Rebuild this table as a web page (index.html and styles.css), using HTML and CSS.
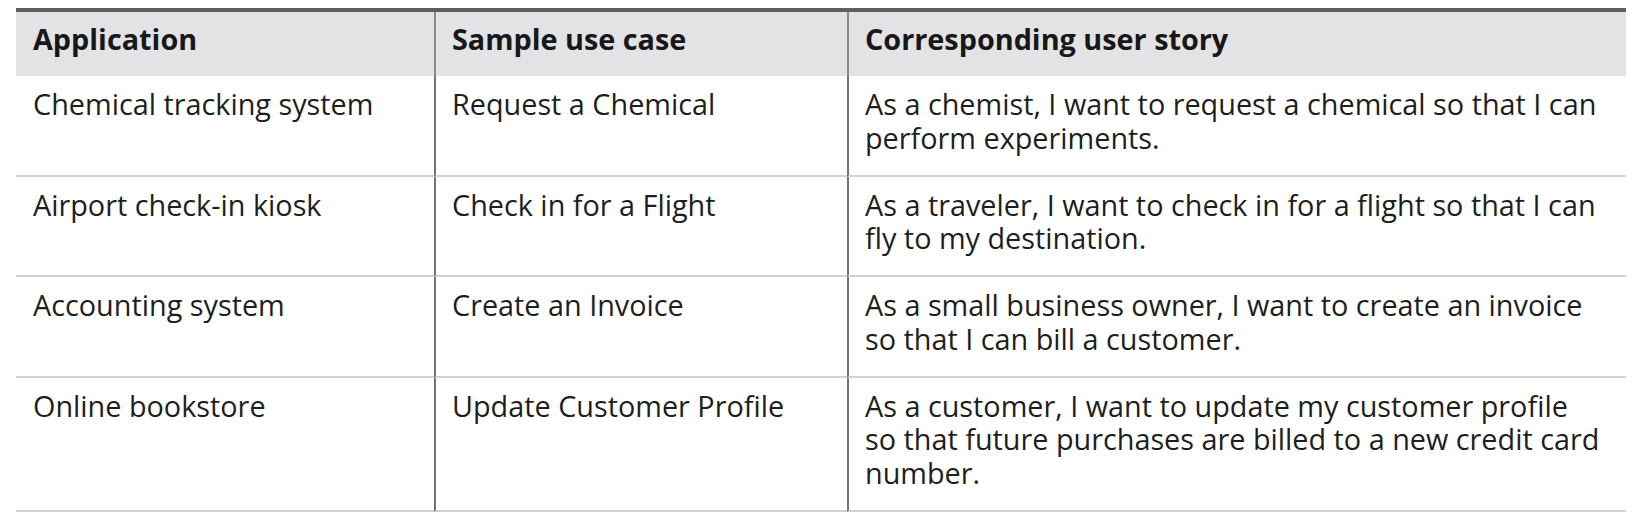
FILE: index.html
```html
<!DOCTYPE html>
<html lang="en">
<head>
<meta charset="utf-8">
<title>Use cases and user stories</title>
<link rel="stylesheet" href="styles.css">
</head>
<body>
<table class="uc-table">
  <colgroup>
    <col class="col-app">
    <col class="col-case">
    <col class="col-story">
  </colgroup>
  <thead>
    <tr>
      <th>Application</th>
      <th>Sample use case</th>
      <th>Corresponding user story</th>
    </tr>
  </thead>
  <tbody>
    <tr>
      <td>Chemical tracking system</td>
      <td>Request a Chemical</td>
      <td>As a chemist, I want to request a chemical so that I can perform experiments.</td>
    </tr>
    <tr>
      <td>Airport check-in kiosk</td>
      <td>Check in for a Flight</td>
      <td>As a traveler, I want to check in for a flight so that I can fly to my destination.</td>
    </tr>
    <tr>
      <td>Accounting system</td>
      <td>Create an Invoice</td>
      <td>As a small business owner, I want to create an invoice so that I can bill a customer.</td>
    </tr>
    <tr>
      <td>Online bookstore</td>
      <td>Update Customer Profile</td>
      <td>As a customer, I want to update my customer profile so that future purchases are billed to a new credit card number.</td>
    </tr>
  </tbody>
</table>
</body>
</html>
```
FILE: styles.css
```css
html, body {
  margin: 0;
  padding: 0;
  background: #ffffff;
}

body {
  font-family: "Open Sans", "Noto Sans", sans-serif;
  font-size: 28.8px;
  line-height: 33.5px;
  color: #1e1e1e;
}

.uc-table {
  margin: 8px 0 0 16px;
  width: 1610px;
  table-layout: fixed;
  border-collapse: separate;
  border-spacing: 0;
  border-top: 4px solid #5e5e5e;
}

.col-app { width: 418px; }
.col-case { width: 413px; }
.col-story { width: 779px; }

.uc-table th,
.uc-table td {
  text-align: left;
  vertical-align: top;
  padding: 11px 22px 20.5px 17px;
}

.uc-table th {
  font-weight: 700;
  background: #e3e3e5;
  padding-top: 10px;
  padding-bottom: 20.5px;
  color: #181818;
}

.uc-table td {
  border-bottom: 2px solid #d2d2d2;
}

.uc-table th + th,
.uc-table td + td {
  border-left: 2px solid #747474;
  padding-left: 16px;
}

.uc-table th + th {
  border-left-color: #8a8a8a;
}
```
